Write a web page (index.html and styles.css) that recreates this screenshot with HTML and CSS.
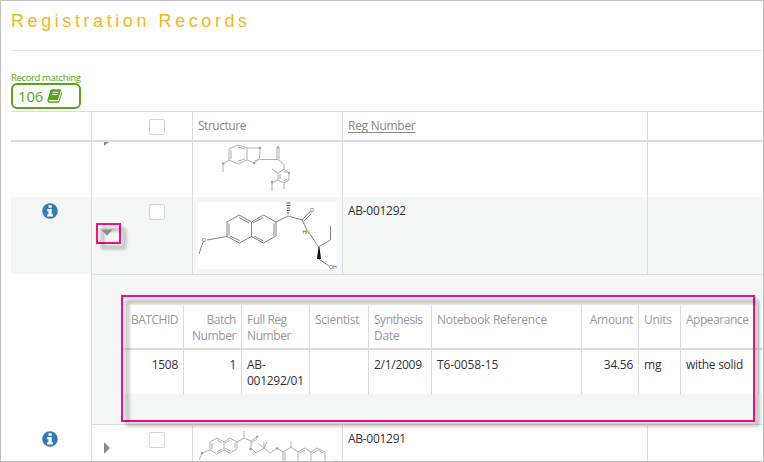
FILE: index.html
```html
<!DOCTYPE html>
<html lang="en">
<head>
<meta charset="utf-8">
<title>Registration Records</title>
<link rel="stylesheet" href="styles.css">
</head>
<body>
<svg class="defs" width="0" height="0" aria-hidden="true">
  <symbol id="info" viewBox="0 0 16 16">
    <circle cx="8" cy="8" r="7.8" fill="#337ab7"/>
    <path d="M6.500 2.200h3.200v2.600H6.500zM5.200 6h4.500v5.200H11v2.200H5.200v-2.200h1.300V8.200H5.200z" fill="#fff"/>
  </symbol>
</svg>
<main class="page">
  <h1 class="title"><span>Registration Records</span></h1>
  <section class="matching">
    <div class="matching-label"><span>Record matching</span></div>
    <div class="matching-box"><span class="count">106</span>
      <svg class="book" width="16" height="14" viewBox="0 0 16 14">
        <path d="M4.600.3h8.500c.7 0 1 .5.800 1.100l-2.700 8.800c-.2.6-.6.9-1.200.9H2.500c-.9 0-1.100 1.200-.2 1.200h8.300c.6 0 1-.3 1.200-.8L14.500 3c.6.2.8.6.6 1.200l-2.600 8.300c-.3.8-.9 1.300-1.800 1.300H2.300C.7 13.800 0 12.500.4 11L3.300 1.300C3.500.6 4 .3 4.600.3z" fill="#5aa41a"/>
        <path d="M5.800 3.300h5.400M5.100 5.500h5.400" stroke="#fff" stroke-width="1"/>
      </svg>
    </div>
  </section>

  <div class="grid">
    <div class="row head">
      <div class="cell"></div>
      <div class="cell tools"><i class="check"></i></div>
      <div class="cell text"><span class="tight">Structure</span></div>
      <div class="cell text"><span class="underline">Reg Number</span></div>
      <div class="cell"></div>
    </div>
    <div class="row clipped">
      <div class="cell"></div>
      <div class="cell tools"><svg class="cut" width="5" height="4"><path d="M0 0h5L0 4z" fill="#8c8c8c"/></svg></div>
      <div class="cell">
        <svg class="mol" width="149" height="55" viewBox="193 142 149 55">
          <g fill="none" stroke="#b0b0b0" stroke-width="1">
            <path d="M229 149l9-4 9 3v12l-9 4-9-4zM231 150v9M238 147l7 2M238 161l7-2M247 148h13l-.5 11-5 4-7.500-3M259.500 159l-5 2M260 159.500h18l6 5v5M277 159v-11M279 159v-11M229 160l-6 4v8"/>
            <path d="M284 169l5 4v7l-5 3-6-3v-7zM280 174v5M284 171l3 2M287 179l-3 2M278 173l-6-4M278 180l-6 3v8M284 183v6"/>
          </g>
          <g fill="#a0a0a0"><circle cx="260" cy="148" r="1.200"/><circle cx="278" cy="147.500" r="1.300"/><circle cx="254" cy="163" r="1.200"/><circle cx="223" cy="163.500" r="1.200"/><circle cx="289" cy="173" r="1.300"/><circle cx="272" cy="182" r="1.200"/></g>
        </svg>
      </div>
      <div class="cell"></div>
      <div class="cell"></div>
    </div>
    <div class="row expanded">
      <div class="cell icon"><svg width="16" height="16"><use href="#info"/></svg></div>
      <div class="cell tools"><i class="check"></i>
        <svg class="down" width="12" height="7"><path d="M0 .5h12L6 6.500z" fill="#8c8c8c"/></svg>
        <i class="marker small"></i>
      </div>
      <div class="cell picture">
        <svg class="mol" width="139" height="67" viewBox="198 202 139 67">
          <rect x="198" y="202" width="139" height="67" fill="#fefefe"/>
          <g fill="none" stroke="#858585" stroke-width="1">
            <path d="M227 222l12-7 12.500 7v14.500l-12 6.500L227 236.500zM229 223.500v12M239 217.500l10 5.500M230 236l9.500 4.500"/>
            <path d="M251.500 222l12-7 12.500 7v14l-12.500 7-12-6.500M263 217.500l-10 5.500M274 223.500v12M254 236l9.500 5"/>
            <path d="M276 222l12-6 14 4 8-8.500M303.500 221.500l8-8M302 220l5 10M310 234l8.500 13 12-7v-14M319 259l10 7M227 236.500L207 240M203 242l-4 12"/>
            <path d="M286.500 203h4M286.500 205.500h4M287 208h3M287 210.500h3M287 213h2" stroke="#555"/>
          </g>
          <path d="M318.500 247l-1.500 12h4l-1.500-12z" fill="#111"/>
          <g fill="#555" class="atoms"><text x="310" y="212">O</text><text x="302.500" y="234">HN</text><text x="202" y="242">O</text><text x="329" y="269">OH</text></g>
        </svg>
      </div>
      <div class="cell text"><span>AB-001292</span></div>
      <div class="cell"></div>
    </div>
    <div class="detail-row">
      <div class="cell"></div>
      <div class="detail">
        <div class="batch">
          <div class="brow bhead">
            <div class="num"><span class="tight">BATCHID</span></div>
            <div class="num"><span class="tight">Batch</span><br><span class="snug">Number</span></div>
            <div><span class="tight">Full Reg</span><br><span class="snug">Number</span></div>
            <div><span>Scientist</span></div>
            <div><span class="tight">Synthesis</span><br><span>Date</span></div>
            <div><span>Notebook Reference</span></div>
            <div class="num"><span>Amount</span></div>
            <div><span>Units</span></div>
            <div><span class="tight">Appearance</span></div>
            <div></div>
          </div>
          <div class="brow bbody">
            <div class="num"><span>1508</span></div>
            <div class="num"><span>1</span></div>
            <div><span>AB-</span><br><span>001292/01</span></div>
            <div></div>
            <div><span>2/1/2009</span></div>
            <div><span class="loose">T6-0058-15</span></div>
            <div class="num"><span>34.56</span></div>
            <div><span class="loose">mg</span></div>
            <div><span>withe solid</span></div>
            <div></div>
          </div>
        </div>
        <i class="marker large"></i>
      </div>
    </div>
    <div class="row last">
      <div class="cell icon"><svg width="16" height="16"><use href="#info"/></svg></div>
      <div class="cell tools"><i class="check"></i><svg class="right" width="6" height="12"><path d="M0 0l6 6-6 6z" fill="#8c8c8c"/></svg></div>
      <div class="cell">
        <svg class="mol" width="149" height="36" viewBox="193 425 149 36">
          <g fill="none" stroke="#b0b0b0" stroke-width="1">
            <path d="M210 442l7-4 7 4v8l-7 4-7-4zM212 443v6M217 440l5 3M217 452l5-3M224 442l6-4 7 4v7l-7 4-6-3M230 440l-5 3M235 443v5M230 451l-5-3"/>
            <path d="M237 442l7-4v-7M244 438l7 3 6-4M251 443l6-4M251 441v7l5 5 8-5 6 5 7-5M264 448l-6-5M264 448l3-6M264 448v-6M210 450l-8 3-3 7"/>
            <path d="M277 448l6 4 8-5v-6M283 452v9M285 452v9M291 447l7 5v9M298 452l7-4 6 4v9M311 452l6-4 8 4v9M300 453l5-3M313 453l5-3 5 3M334 461h4"/>
          </g>
          <g fill="#a0a0a0"><circle cx="257" cy="437" r="1.300"/><circle cx="250.500" cy="449" r="1.300"/><circle cx="277" cy="448.500" r="1.300"/><circle cx="202" cy="453" r="1.300"/></g>
        </svg>
      </div>
      <div class="cell text"><span>AB-001291</span></div>
      <div class="cell"></div>
    </div>
  </div>
</main>
</body>
</html>
```
FILE: styles.css
```css
* { box-sizing: border-box; }
body { margin: 0; background: #fefefe; font: 12px/16px "Open Sans", "Noto Sans", sans-serif; color: #333; }
.defs { position: absolute; }
.page { width: 764px; height: 462px; overflow: hidden; border: 1px solid #c0c0c0; padding-left: 10px; }
svg { display: block; }
span { white-space: nowrap; }
.title { margin: 0; height: 50px; padding-top: 9px; border-bottom: 1px solid #e6e6e6; font: 400 18px/22px "Liberation Sans", Arial, sans-serif; letter-spacing: 3.58px; color: #edb91f; }
.matching { height: 60px; padding-top: 20px; color: #5aa41a; }
.matching-label { height: 12px; font-size: 9.500px; line-height: 13px; letter-spacing: -.36px; }
.matching-box { width: 70px; height: 26px; border: 2px solid #5aa41a; border-radius: 6px; display: flex; align-items: center; padding-left: 5px; gap: 4px; background: #fff; }
.count { font-size: 15px; letter-spacing: -.2px; }
.grid { border-top: 1px solid #dcdcdc; letter-spacing: -.28px; }
.tight { letter-spacing: -.47px; }
.snug { letter-spacing: -.4px; }
.loose { letter-spacing: -.1px; }
.underline { text-decoration: underline; text-underline-offset: 2px; text-decoration-skip-ink: none; }
.row { display: grid; grid-template-columns: 80px 101px 150px 305px 1fr; }
.cell { border-left: 1px solid #dcdcdc; position: relative; }
.row > .cell:first-child, .detail-row > .cell:first-child { border-left: 0; }
.head { height: 30px; border-bottom: 2px solid #dcdcdc; color: #888; }
.text { padding: 6px 0 0 5px; }
.check { display: block; width: 16px; height: 16px; margin: 7px 0 0 57px; border: 1px solid #d5d5d5; border-radius: 2px; background: #fff; }
.clipped { height: 55px; }
.cut { margin-left: 12px; }
.expanded { height: 77px; background: #f5f7f7; }
.icon { padding: 6px 0 0 31px; }
.down { margin: 8px 0 0 9px; position: relative; top: 1px; z-index: 4; }
.picture { padding: 5px 0 0 5px; }
.atoms { font: 5px "Liberation Sans", sans-serif; letter-spacing: 0; }
.detail-row { display: grid; grid-template-columns: 80px 1fr; height: 151px; }
.detail { position: relative; border: solid #dcdcdc; border-width: 1px 0 1px 1px; background: #f5f7f7; padding: 30px 0 0 31px; }
.batch { background: #fefefe; }
.brow { display: grid; grid-template-columns: 60px 58px 68px 59px 63px 150px 57px 42px 78px 1fr; }
.brow > div { border-left: 1px solid #dcdcdc; padding: 7px 5px 0; }
.brow > div:first-child { border-left: 0; }
.num { text-align: right; }
.bhead { height: 45px; border-bottom: 2px solid #dcdcdc; color: #999; }
.bbody { height: 44px; }
.marker { position: absolute; border: 2px solid #ff0a85; z-index: 3; pointer-events: none; }
/* The frame's shadow is a hollow ring, offset down and to the right. */
.marker::after { content: ""; position: absolute; inset: 2px -8px -8px 2px; border: 5px solid rgba(0,0,0,.17); border-radius: 4px; filter: blur(1px); z-index: -1; }
.small { left: 4px; top: 26px; width: 25px; height: 21px; }
.large { left: 29px; top: 20px; width: 634px; height: 127px; }
.large::after { inset: 2px -7px -7px 2px; }
.last { height: 37px; }
.last .check { margin-bottom: 0; }
.right { margin-left: 12px; transform: translateY(-6px); }
```
